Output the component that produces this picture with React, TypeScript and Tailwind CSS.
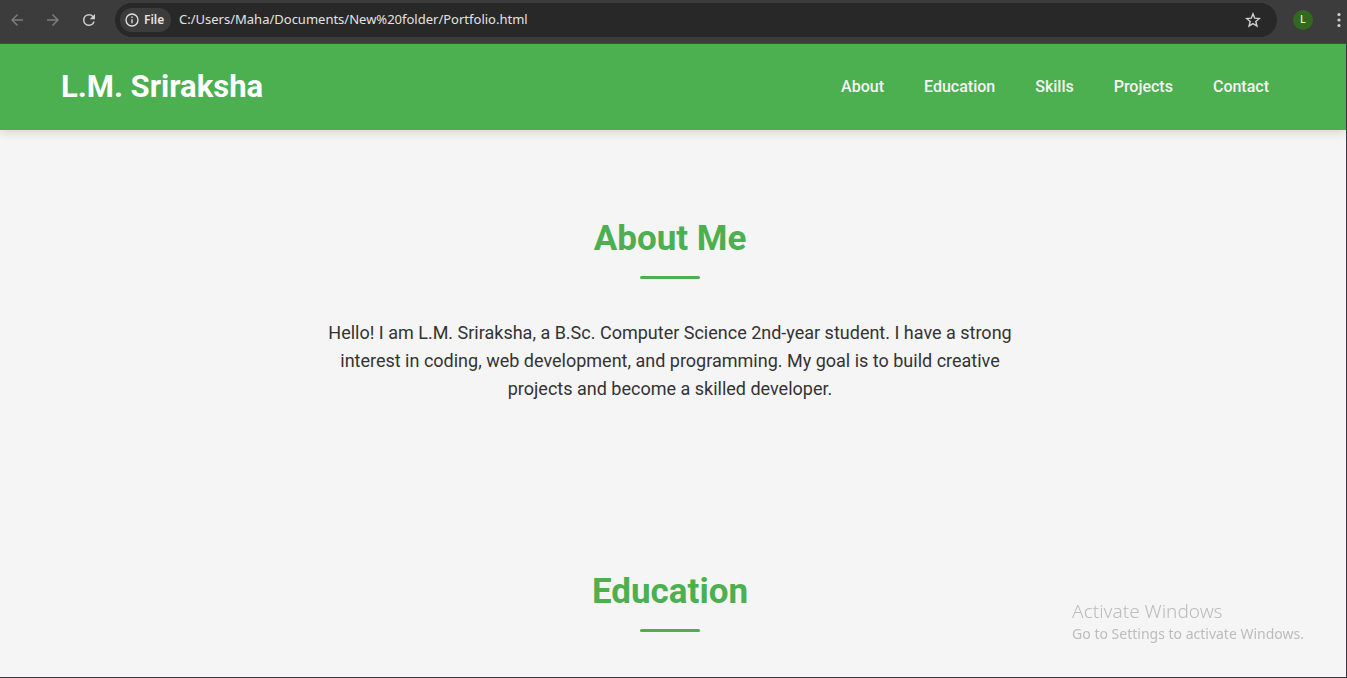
import type { ReactNode } from 'react';

const links = ['About', 'Education', 'Skills', 'Projects', 'Contact'];

function IconButton({ label, className, children }: { label: string; className: string; children: ReactNode }) {
  return (
    <button type="button" aria-label={label} className={`flex shrink-0 items-center justify-center ${className}`}>
      {children}
    </button>
  );
}

function BrowserBar() {
  return (
    <div className="flex h-11 items-center overflow-hidden border-b border-[#474747] bg-[#3c3c3c] pb-1 font-['Noto_Sans',sans-serif]">
      <IconButton label="Back" className="ml-2 size-[18px] text-[#7c7c7c]">
        <svg width="18" height="18" viewBox="0 0 24 24" fill="currentColor">
          <path d="M20 11H7.83l5.59-5.59L12 4l-8 8 8 8 1.41-1.41L7.83 13H20v-2z" />
        </svg>
      </IconButton>
      <IconButton label="Forward" className="ml-[18px] size-[18px] text-[#7c7c7c]">
        <svg width="18" height="18" viewBox="0 0 24 24" fill="currentColor">
          <path d="M12 4l-1.41 1.41L16.17 11H4v2h12.17l-5.58 5.59L12 20l8-8z" />
        </svg>
      </IconButton>
      <IconButton label="Reload" className="ml-[18px] size-[18px] text-[#d0d0d0]">
        <svg width="18" height="18" viewBox="0 0 24 24" fill="currentColor">
          <path d="M17.65 6.35A7.96 7.96 0 0 0 12 4a8 8 0 1 0 7.73 10h-2.08A6 6 0 1 1 12 6c1.66 0 3.14.69 4.22 1.78L13 11h7V4l-2.35 2.35z" />
        </svg>
      </IconButton>
      <div className="ml-[17px] flex h-[34px] min-w-0 flex-1 items-center rounded-full bg-[#282828] pr-4 pl-[5px]">
        <button type="button" className="flex h-6 w-[51px] shrink-0 items-center gap-[5px] rounded-full bg-[#3c3c3c] pl-[5px] text-xs font-semibold text-[#e3e3e3]">
          <svg width="14" height="14" viewBox="0 0 14 14" fill="none" stroke="currentColor" strokeWidth="1.3">
            <circle cx="7" cy="7" r="6" />
            <path d="M7 6.2v4M7 3.6v1.4" />
          </svg>
          File
        </button>
        <input
          aria-label="Address"
          defaultValue="C:/Users/Maha/Documents/New%20folder/Portfolio.html"
          className="ml-2 min-w-0 flex-1 bg-transparent text-[13px] text-[#e3e3e3] outline-none"
        />
        <IconButton label="Bookmark this page" className="size-4 text-[#d0d0d0]">
          <svg width="16" height="16" viewBox="0 0 24 24" fill="none" stroke="currentColor" strokeWidth="2.1">
            <path d="M12 2.8l2.6 6.5 7 .5-5.4 4.5 1.7 6.8-5.9-3.7-5.9 3.7 1.7-6.8-5.4-4.5 7-.5z" />
          </svg>
        </IconButton>
      </div>
      <IconButton label="Profile" className="ml-4 size-5 rounded-full bg-[#33691e] text-[11px] text-white">
        L
      </IconButton>
      <IconButton label="Menu" className="ml-[18px] h-5 w-[16px] text-[#d0d0d0]">
        <svg width="16" height="20" viewBox="0 0 16 20" fill="currentColor">
          <circle cx="8" cy="4.5" r="1.6" />
          <circle cx="8" cy="10" r="1.6" />
          <circle cx="8" cy="15.5" r="1.6" />
        </svg>
      </IconButton>
    </div>
  );
}

function SectionTitle({ children }: { children: ReactNode }) {
  return (
    <div className="flex flex-col items-center gap-2">
      <h2 className="text-[35px] leading-[58px] font-bold text-[#4caf50]">{children}</h2>
      <span className="h-[3px] w-[60px] rounded-sm bg-[#4caf50]" />
    </div>
  );
}

export default function App() {
  return (
    <div className="flex h-screen flex-col overflow-hidden bg-[#f5f5f5] font-[Roboto,sans-serif] text-[#333]">
      <BrowserBar />
      <div className="min-h-0 flex-1 overflow-hidden border-r border-b border-[#3f373f]">
        <header className="flex items-center justify-between bg-[#4caf50] py-5 pr-[77px] pl-[61px] text-white shadow-[0_2px_10px_rgba(0,0,0,0.15)]">
          <h1 className="text-[31px] leading-[46px] font-bold">L.M. Sriraksha</h1>
          <nav className="flex gap-10">
            {links.map((link) => (
              <a key={link} href={`#${link.toLowerCase()}`} className="text-base font-medium text-[#f4f4f4]">
                {link}
              </a>
            ))}
          </nav>
        </header>
        <main className="pr-[6px]">
          <section id="about" className="px-5 py-20">
            <SectionTitle>About Me</SectionTitle>
            <p className="mx-auto mt-10 max-w-[700px] text-center text-lg leading-7">
              Hello! I am L.M. Sriraksha, a B.Sc. Computer Science 2nd-year student. I have a strong interest in coding,
              web development, and programming. My goal is to build creative projects and become a skilled developer.
            </p>
          </section>
          <section id="education" className="px-5 py-20">
            <SectionTitle>Education</SectionTitle>
          </section>
        </main>
      </div>
      <aside className="pointer-events-none fixed right-[43px] bottom-[33px] font-['Noto_Sans',sans-serif] text-[#bcbcbc]">
        <p className="text-[19px] leading-6 font-light">Activate Windows</p>
        <p className="text-sm leading-[22px]">Go to Settings to activate Windows.</p>
      </aside>
    </div>
  );
}
